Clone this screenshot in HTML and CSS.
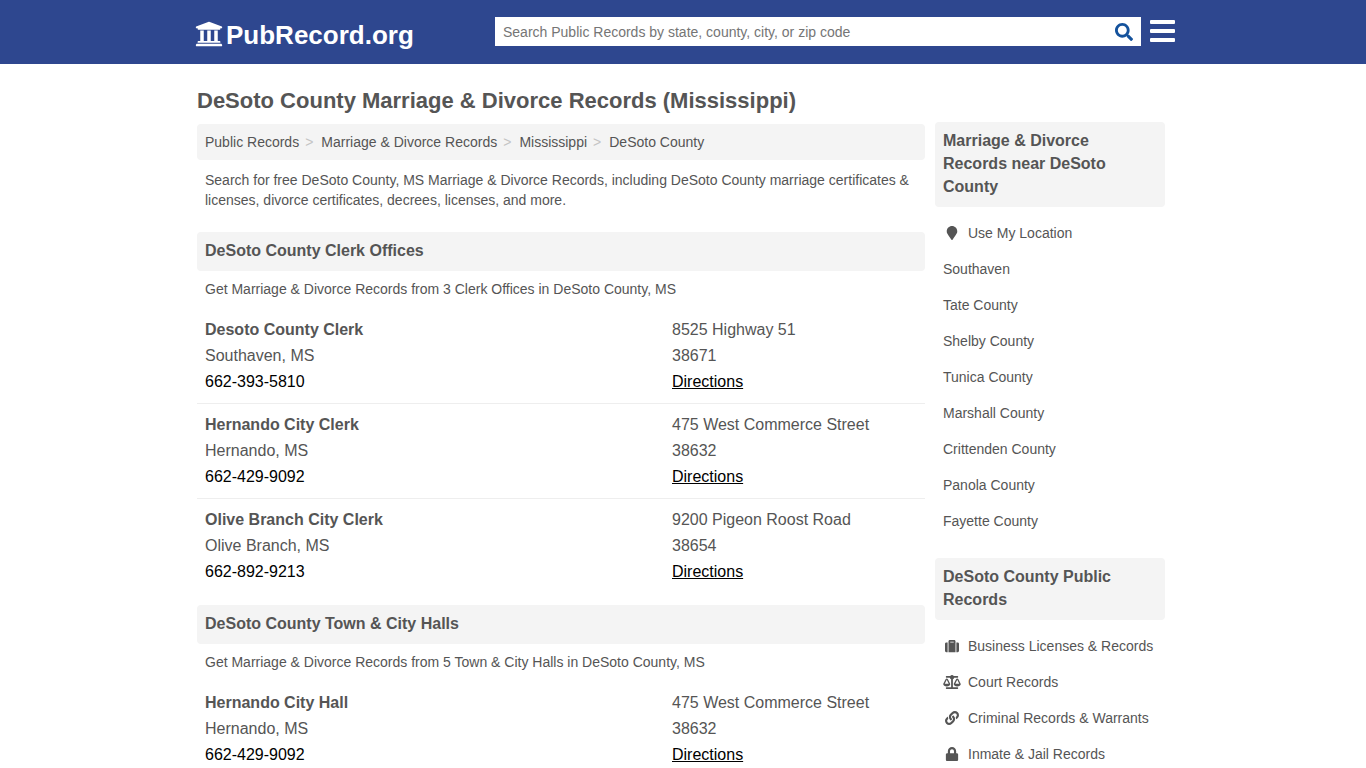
FILE: index.html
```html
<!DOCTYPE html>
<html lang="en">
<head>
<meta charset="utf-8">
<meta name="viewport" content="width=device-width, initial-scale=1">
<title>DeSoto County Marriage &amp; Divorce Records (Mississippi)</title>
<link rel="stylesheet" href="styles.css">
</head>
<body>
<header class="site-header">
  <div class="header-inner">
    <a class="logo" href="#">
      <svg class="logo-icon" viewBox="0 0 512 512" aria-hidden="true"><path d="M496 128v16a8 8 0 0 1-8 8h-24v12c0 6.627-5.373 12-12 12H60c-6.627 0-12-5.373-12-12v-12H24a8 8 0 0 1-8-8v-16a8 8 0 0 1 4.941-7.392l232-88a7.996 7.996 0 0 1 6.118 0l232 88A8 8 0 0 1 496 128zm-24 304H40c-13.255 0-24 10.745-24 24v16a8 8 0 0 0 8 8h464a8 8 0 0 0 8-8v-16c0-13.255-10.745-24-24-24zM96 192v192H60c-6.627 0-12 5.373-12 12v20h416v-20c0-6.627-5.373-12-12-12h-36V192h-64v192h-64V192h-64v192h-64V192H96z"/></svg>
      <span>PubRecord.org</span>
    </a>
    <form class="search">
      <input class="search-input" type="text" aria-label="Search Public Records" placeholder="Search Public Records by state, county, city, or zip code">
      <button class="search-button" type="submit" aria-label="Search">
        <svg class="search-icon" viewBox="0 0 512 512" aria-hidden="true"><path d="M505 442.7L405.3 343c-4.500-4.500-10.600-7-17-7H372c27.600-35.300 44-79.700 44-128C416 93.100 322.900 0 208 0S0 93.100 0 208s93.100 208 208 208c48.300 0 92.700-16.400 128-44v16.300c0 6.400 2.500 12.500 7 17l99.700 99.700c9.400 9.400 24.600 9.400 33.900 0l28.300-28.300c9.400-9.400 9.400-24.600.1-34zM208 336c-70.700 0-128-57.200-128-128 0-70.700 57.200-128 128-128 70.700 0 128 57.200 128 128 0 70.700-57.200 128-128 128z"/></svg>
      </button>
    </form>
    <button class="menu-button" type="button" aria-label="Menu">
      <svg class="menu-icon" viewBox="0 0 25 22" aria-hidden="true"><rect width="25" height="4" rx="1"/><rect y="9" width="25" height="4" rx="1"/><rect y="18" width="25" height="4" rx="1"/></svg>
    </button>
  </div>
</header>

<div class="page">
  <h1 class="page-title">DeSoto County Marriage &amp; Divorce Records (Mississippi)</h1>
  <div class="columns">
    <main class="main">
      <nav aria-label="Breadcrumb">
        <ol class="breadcrumbs">
          <li><a href="#">Public Records</a></li>
          <li><a href="#">Marriage &amp; Divorce Records</a></li>
          <li><a href="#">Mississippi</a></li>
          <li><a href="#">DeSoto County</a></li>
        </ol>
      </nav>
      <p class="intro">Search for free DeSoto County, MS Marriage &amp; Divorce Records, including DeSoto County marriage certificates &amp; licenses, divorce certificates, decrees, licenses, and more.</p>

      <section class="offices">
        <h2 class="heading">DeSoto County Clerk Offices</h2>
        <p class="note">Get Marriage &amp; Divorce Records from 3 Clerk Offices in DeSoto County, MS</p>
        <article class="office">
          <div class="office-name"><h3>Desoto County Clerk</h3><p>Southaven, MS</p><a class="phone" href="tel:662-393-5810">662-393-5810</a></div>
          <div class="office-address"><p>8525 Highway 51</p><p>38671</p><a href="#">Directions</a></div>
        </article>
        <article class="office">
          <div class="office-name"><h3>Hernando City Clerk</h3><p>Hernando, MS</p><a class="phone" href="tel:662-429-9092">662-429-9092</a></div>
          <div class="office-address"><p>475 West Commerce Street</p><p>38632</p><a href="#">Directions</a></div>
        </article>
        <article class="office">
          <div class="office-name"><h3>Olive Branch City Clerk</h3><p>Olive Branch, MS</p><a class="phone" href="tel:662-892-9213">662-892-9213</a></div>
          <div class="office-address"><p>9200 Pigeon Roost Road</p><p>38654</p><a href="#">Directions</a></div>
        </article>
      </section>

      <section class="offices">
        <h2 class="heading">DeSoto County Town &amp; City Halls</h2>
        <p class="note">Get Marriage &amp; Divorce Records from 5 Town &amp; City Halls in DeSoto County, MS</p>
        <article class="office">
          <div class="office-name"><h3>Hernando City Hall</h3><p>Hernando, MS</p><a class="phone" href="tel:662-429-9092">662-429-9092</a></div>
          <div class="office-address"><p>475 West Commerce Street</p><p>38632</p><a href="#">Directions</a></div>
        </article>
      </section>
    </main>

    <aside class="sidebar">
      <h2 class="heading side-heading">Marriage &amp; Divorce Records near DeSoto County</h2>
      <ul class="side-list">
        <li><a href="#"><svg class="icon" viewBox="0 0 384 512" aria-hidden="true"><path d="M172.268 501.670C26.970 291.031 0 269.413 0 192 0 85.961 85.961 0 192 0s192 85.961 192 192c0 77.413-26.970 99.031-172.268 309.670-9.535 13.774-29.930 13.773-39.464 0z"/></svg>Use My Location</a></li>
        <li><a href="#">Southaven</a></li>
        <li><a href="#">Tate County</a></li>
        <li><a href="#">Shelby County</a></li>
        <li><a href="#">Tunica County</a></li>
        <li><a href="#">Marshall County</a></li>
        <li><a href="#">Crittenden County</a></li>
        <li><a href="#">Panola County</a></li>
        <li><a href="#">Fayette County</a></li>
      </ul>
      <h2 class="heading side-heading">DeSoto County Public Records</h2>
      <ul class="side-list">
        <li><a href="#"><svg class="icon" viewBox="0 0 512 512" aria-hidden="true"><path d="M128 480h256V80c0-26.500-21.500-48-48-48H176c-26.500 0-48 21.500-48 48v400zm64-384h128v32H192V96zm320 80v256c0 26.500-21.500 48-48 48h-48V128h48c26.500 0 48 21.500 48 48zM96 480H48c-26.500 0-48-21.500-48-48V176c0-26.500 21.500-48 48-48h48v352z"/></svg>Business Licenses &amp; Records</a></li>
        <li><a href="#"><svg class="icon" viewBox="0 0 640 512" aria-hidden="true"><path d="M256 336h-.02c0-16.180 1.340-8.730-85.050-181.510-17.650-35.290-68.190-35.360-85.870 0C-2.060 328.750.02 320.330.02 336H0c0 44.180 57.310 80 128 80s128-35.820 128-80zM128 176l72 144H56l72-144zm511.980 160c0-16.180 1.340-8.730-85.050-181.510-17.650-35.290-68.190-35.360-85.870 0-87.120 174.260-85.040 165.840-85.040 181.510H384c0 44.180 57.310 80 128 80s128-35.820 128-80h-.02zM440 320l72-144 72 144H440zm88 128H352V153.250c23.510-10.290 41.160-31.480 46.390-57.250H528c8.840 0 16-7.160 16-16V48c0-8.840-7.160-16-16-16H383.640C369.040 12.680 346.090 0 320 0s-49.040 12.680-63.640 32H112c-8.840 0-16 7.160-16 16v32c0 8.840 7.160 16 16 16h129.610c5.230 25.760 22.870 46.960 46.390 57.250V448H112c-8.840 0-16 7.160-16 16v32c0 8.840 7.160 16 16 16h416c8.840 0 16-7.160 16-16v-32c0-8.840-7.160-16-16-16z"/></svg>Court Records</a></li>
        <li><a href="#"><svg class="icon" viewBox="0 0 512 512" aria-hidden="true"><path d="M326.612 185.391c59.747 59.809 58.927 155.698.36 214.590-.11.12-.24.25-.36.37l-67.200 67.200c-59.270 59.270-155.699 59.262-214.960 0-59.270-59.260-59.270-155.700 0-214.960l37.106-37.106c9.840-9.840 26.786-3.300 27.294 10.606.648 17.722 3.826 35.527 9.690 52.721 1.986 5.822.567 12.262-3.783 16.612l-13.087 13.087c-28.026 28.026-28.905 73.660-1.155 101.960 28.024 28.579 74.086 28.749 102.325.51l67.200-67.190c28.191-28.191 28.073-73.757 0-101.830-3.701-3.694-7.429-6.564-10.341-8.569a16.037 16.037 0 0 1-6.947-12.606c-.396-10.567 3.348-21.456 11.698-29.806l21.054-21.055c5.521-5.521 14.182-6.199 20.584-1.731a152.482 152.482 0 0 1 20.522 17.197zM467.547 44.449c-59.261-59.262-155.690-59.270-214.960 0l-67.200 67.200c-.12.12-.25.25-.36.37-58.566 58.892-59.387 154.781.36 214.590a152.454 152.454 0 0 0 20.521 17.196c6.402 4.468 15.064 3.789 20.584-1.731l21.054-21.055c8.350-8.350 12.094-19.239 11.698-29.806a16.037 16.037 0 0 0-6.947-12.606c-2.912-2.005-6.640-4.875-10.341-8.569-28.073-28.073-28.191-73.639 0-101.830l67.200-67.190c28.239-28.239 74.300-28.069 102.325.51 27.750 28.300 26.872 73.934-1.155 101.960l-13.087 13.087c-4.350 4.350-5.769 10.790-3.783 16.612 5.864 17.194 9.042 34.999 9.690 52.721.509 13.906 17.454 20.446 27.294 10.606l37.106-37.106c59.271-59.259 59.271-155.699.001-214.959z"/></svg>Criminal Records &amp; Warrants</a></li>
        <li><a href="#"><svg class="icon" viewBox="0 0 448 512" aria-hidden="true"><path d="M400 224h-24v-72C376 68.200 307.800 0 224 0S72 68.200 72 152v72H48c-26.500 0-48 21.500-48 48v192c0 26.500 21.500 48 48 48h352c26.500 0 48-21.500 48-48V272c0-26.500-21.500-48-48-48zm-104 0H152v-72c0-39.700 32.300-72 72-72s72 32.300 72 72v72z"/></svg>Inmate &amp; Jail Records</a></li>
      </ul>
    </aside>
  </div>
</div>
</body>
</html>
```
FILE: styles.css
```css
* {
  box-sizing: border-box;
}

body {
  margin: 0;
  background: #fff;
  color: #555;
  font-family: "Liberation Sans", Arial, sans-serif;
  font-size: 14px;
  line-height: 20px;
}

h1, h2, h3, p, ul, ol {
  margin: 0;
  padding: 0;
}

ul, ol {
  list-style: none;
}

a {
  color: inherit;
  text-decoration: none;
}

svg {
  display: block;
  fill: currentColor;
}

.site-header {
  background: #2e478f;
  color: #fff;
}

.header-inner {
  display: flex;
  align-items: center;
  max-width: 984px;
  min-height: 64px;
  margin: 0 auto;
  padding-left: 4px;
}

.logo {
  display: flex;
  align-items: flex-start;
  gap: 3px;
  flex: 0 0 300px;
  padding-top: 5px;
  font-size: 26px;
  font-weight: bold;
  line-height: 30px;
}

.logo-icon {
  width: 28px;
  height: 28px;
}

.search {
  display: flex;
  flex: 1;
  height: 29px;
  margin-bottom: 2px;
  background: #fff;
}

.search-input {
  flex: 1;
  min-width: 0;
  border: 0;
  padding: 2px 8px 0;
  background: none;
  color: #555;
  font: inherit;
}

.search-input::placeholder {
  color: #757575;
}

.search-button {
  display: flex;
  align-items: center;
  border: 0;
  padding: 2px 8px 0;
  background: none;
  color: #14529c;
}

.search-icon {
  width: 18px;
  height: 18px;
}

.menu-button {
  margin: 0 0 2px 9px;
  border: 0;
  padding: 0;
  background: none;
  color: #fff;
}

.menu-icon {
  width: 25px;
  height: 22px;
}

.page {
  max-width: 980px;
  margin: 0 auto;
  padding: 23px 8px 0 4px;
}

.page-title {
  padding-bottom: 7px;
  font-size: 22px;
  line-height: 28px;
}

.columns {
  display: flex;
  align-items: flex-start;
  gap: 10px;
}

.main {
  flex: 1;
  min-width: 0;
  padding-top: 2px;
}

.breadcrumbs {
  display: flex;
  padding: 8px;
  border-radius: 4px;
  background: #f4f4f4;
}

.breadcrumbs li + li::before {
  content: ">";
  padding: 0 8px 0 6px;
  color: #c4c4c4;
}

.intro {
  padding: 10px 8px 22px;
}

.heading {
  padding: 7px 8px 9px;
  border-radius: 4px;
  background: #f4f4f4;
  font-size: 16px;
  line-height: 23px;
}

.note {
  padding: 8px 8px 10px;
}

.offices + .offices {
  margin-top: 12px;
}

.office {
  display: grid;
  grid-template-columns: 467px 1fr;
  padding: 8px;
  font-size: 16px;
  line-height: 26px;
}

.office + .office {
  border-top: 1px solid #eee;
}

.office h3 {
  font-size: 16px;
}

.office a {
  color: #000;
}

.office-address a {
  text-decoration: underline;
}

.sidebar {
  flex: 0 0 230px;
}

.side-list {
  padding: 8px 0 19px;
}

.side-list a {
  display: flex;
  align-items: center;
  gap: 7px;
  padding: 8px;
}

.icon {
  width: 18px;
  height: 14px;
}
```
